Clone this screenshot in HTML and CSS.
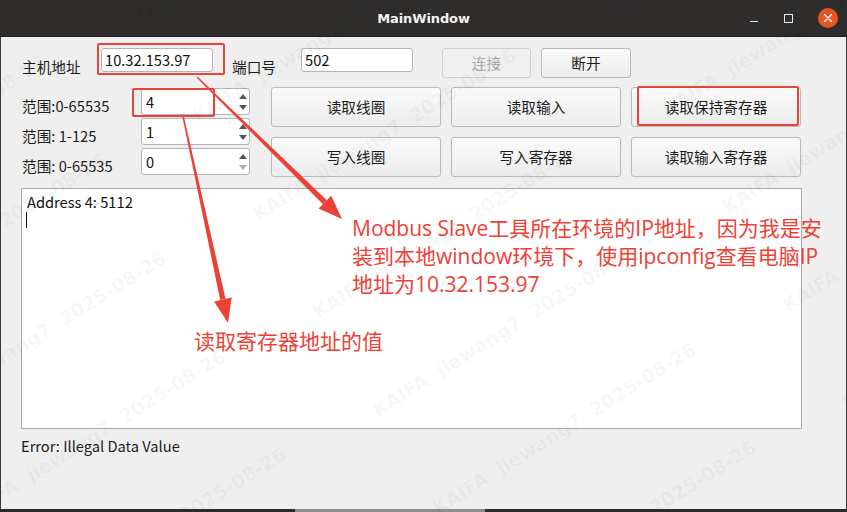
FILE: index.html
```html
<!DOCTYPE html>
<html lang="zh-CN">
<head>
<meta charset="utf-8">
<title>MainWindow</title>
<link rel="stylesheet" href="styles.css">
</head>
<body>
<div class="window">
  <header class="titlebar">
    <span class="title">MainWindow</span>
    <div class="controls">
      <span class="ctl-min"></span>
      <span class="ctl-max"></span>
      <span class="ctl-close">
        <svg width="20" height="20" viewBox="0 0 20 20"><path d="M6.5 6.5 L13.5 13.5 M13.5 6.5 L6.5 13.5" stroke="#fff" stroke-width="1.4" stroke-linecap="round"/></svg>
      </span>
    </div>
  </header>
  <main class="client">
    <div class="row-top">
      <span class="lbl lbl-host">主机地址</span>
      <div class="field field-ip">10.32.153.97</div>
      <span class="lbl lbl-port">端口号</span>
      <div class="field field-port">502</div>
      <button class="btn btn-conn" disabled>连接</button>
      <button class="btn btn-disc">断开</button>
    </div>
    <div class="mid">
      <div class="ranges">
        <div class="range-row">
          <span class="lbl lbl-range">范围:0-65535</span>
          <div class="spin"><span class="spin-val">4</span><span class="arrows"><i class="up"></i><i class="down"></i></span></div>
        </div>
        <div class="range-row">
          <span class="lbl lbl-range">范围: 1-125</span>
          <div class="spin"><span class="spin-val">1</span><span class="arrows"><i class="up"></i><i class="down"></i></span></div>
        </div>
        <div class="range-row">
          <span class="lbl lbl-range">范围: 0-65535</span>
          <div class="spin"><span class="spin-val">0</span><span class="arrows"><i class="up"></i><i class="down off"></i></span></div>
        </div>
      </div>
      <div class="btn-grid">
        <button class="btn">读取线圈</button>
        <button class="btn">读取输入</button>
        <button class="btn">读取保持寄存器</button>
        <button class="btn">写入线圈</button>
        <button class="btn">写入寄存器</button>
        <button class="btn">读取输入寄存器</button>
      </div>
    </div>
    <div class="output">
      <div class="out-line">Address 4: 5112</div>
      <span class="caret"></span>
    </div>
    <div class="status">Error: Illegal Data Value</div>
  </main>
  <div class="bottom-edge"><span class="edge-seg"></span></div>

  <div class="watermark" aria-hidden="true">
    <span class="wm a1">KAIFA&nbsp;&nbsp;jiewang7&nbsp;&nbsp;2025-08-26</span>
    <span class="wm a2">KAIFA&nbsp;&nbsp;jiewang7&nbsp;&nbsp;2025-08-26</span>
    <span class="wm a3">KAIFA&nbsp;&nbsp;jiewang7&nbsp;&nbsp;2025-08-26</span>
    <span class="wm a4">KAIFA&nbsp;&nbsp;jiewang7&nbsp;&nbsp;2025-08-26</span>
    <span class="wm a5">KAIFA&nbsp;&nbsp;jiewang7&nbsp;&nbsp;2025-08-26</span>
    <span class="wm b1">KAIFA&nbsp;&nbsp;jiewang7&nbsp;&nbsp;2025-08-26</span>
    <span class="wm b2">KAIFA&nbsp;&nbsp;jiewang7&nbsp;&nbsp;2025-08-26</span>
    <span class="wm b3">KAIFA&nbsp;&nbsp;jiewang7&nbsp;&nbsp;2025-08-26</span>
    <span class="wm b4">KAIFA&nbsp;&nbsp;jiewang7&nbsp;&nbsp;2025-08-26</span>
    <span class="wm b5">KAIFA&nbsp;&nbsp;jiewang7&nbsp;&nbsp;2025-08-26</span>
    <span class="wm b6">KAIFA&nbsp;&nbsp;jiewang7&nbsp;&nbsp;2025-08-26</span>
    <span class="wm b7">KAIFA&nbsp;&nbsp;jiewang7&nbsp;&nbsp;2025-08-26</span>
    <span class="wm c1">KAIFA&nbsp;&nbsp;jiewang7&nbsp;&nbsp;2025-08-26</span>
    <span class="wm c2">KAIFA&nbsp;&nbsp;jiewang7&nbsp;&nbsp;2025-08-26</span>
    <span class="wm c3">KAIFA&nbsp;&nbsp;jiewang7&nbsp;&nbsp;2025-08-26</span>
    <span class="wm c4">KAIFA&nbsp;&nbsp;jiewang7&nbsp;&nbsp;2025-08-26</span>
    <span class="wm c5">KAIFA&nbsp;&nbsp;jiewang7&nbsp;&nbsp;2025-08-26</span>
  </div>

  <span class="mark mark-ip"></span>
  <span class="mark mark-start"></span>
  <span class="mark mark-hold"></span>
  <svg class="arrows-layer" width="847" height="512" viewBox="0 0 847 512">
    <g fill="#ec4136">
      <polygon points="196.5,77.5 197.5,76.5 326.9,200.2 323.0,204.2"/>
      <polygon points="342,219 318.6,208.6 331.2,195.8"/>
      <polygon points="182.3,116.2 183.7,115.8 225.6,299 220.2,300.1"/>
      <polygon points="228,323 214.1,301.5 231.7,297.6"/>
    </g>
  </svg>
  <p class="note note-ip">Modbus Slave工具所在环境的IP地址，因为我是安<br>装到本地window环境下，使用ipconfig查看电脑IP<br>地址为10.32.153.97</p>
  <p class="note note-val">读取寄存器地址的值</p>
</div>
</body>
</html>
```
FILE: styles.css
```css
* { box-sizing: border-box; }
html, body { margin: 0; padding: 0; }
body {
  width: 847px;
  height: 512px;
  overflow: hidden;
  background: #2c2b2a;
  font-family: "Noto Sans CJK SC", "Noto Sans", sans-serif;
}
.window {
  position: relative;
  width: 847px;
  height: 512px;
  display: flex;
  flex-direction: column;
  overflow: hidden;
}

/* title bar */
.titlebar {
  height: 37px;
  flex: none;
  background: #2f2d2c;
  border-bottom: 1px solid #1f1e1d;
  display: flex;
  align-items: center;
  justify-content: center;
  position: relative;
}
.title {
  color: #f2f2f2;
  font-family: "DejaVu Sans", sans-serif;
  font-weight: bold;
  font-size: 13px;
  letter-spacing: -0.1px;
}
.controls {
  position: absolute;
  right: 9px;
  top: 8px;
  display: flex;
  align-items: center;
  height: 20px;
}
.ctl-min {
  width: 8px;
  height: 1px;
  background: #e8e8e8;
  margin-top: 6px;
  margin-right: 26px;
}
.ctl-max {
  width: 9px;
  height: 9px;
  border: 1px solid #e8e8e8;
  margin-right: 25px;
}
.ctl-close {
  width: 20px;
  height: 20px;
  border-radius: 50%;
  background: #e95420;
  display: flex;
}

/* client */
.client {
  flex: 1;
  background: #efefef;
  border-left: 1px solid #3a3a3a;
  border-right: 1px solid #3a3a3a;
  padding-left: 20px;
  font-size: 14.67px;
  color: #1c1c1c;
}
.lbl {
  display: block;
  line-height: 20px;
  white-space: nowrap;
}
.row-top {
  display: flex;
  align-items: flex-start;
  margin-top: 11px;
  height: 30px;
}
.lbl-host { margin-left: 1px; width: 79px; margin-top: 9px; }
.lbl-port { margin-left: 19px; width: 69px; margin-top: 9px; }
.field {
  height: 24px;
  width: 112px;
  background: #fff;
  border: 1px solid #b4b4b4;
  border-radius: 3px;
  padding-left: 3px;
  line-height: 22px;
  color: #111;
}
.btn {
  font-family: inherit;
  font-size: 14.67px;
  color: #1c1c1c;
  background: linear-gradient(#fafafa, #ececec);
  border: 1px solid #b9b9b9;
  border-radius: 3px;
  padding: 0;
  line-height: 20px;
}
.btn-conn {
  margin-left: 29px;
  width: 89px;
  height: 30px;
  color: #a9a9a9;
  background: #f0f0f0;
  border-color: #cdcdcd;
}
.btn-disc {
  margin-left: 10px;
  width: 90px;
  height: 30px;
}

.mid {
  display: flex;
  margin-top: 9px;
}
.ranges {
  width: 229px;
  padding-top: 1px;
}
.range-row {
  display: flex;
  align-items: flex-start;
  height: 30px;
}
.lbl-range { margin-left: 1px; width: 119px; margin-top: 8px; }
.spin {
  width: 109px;
  height: 27px;
  background: #fff;
  border: 1px solid #b4b4b4;
  border-radius: 3px;
  display: flex;
  align-items: center;
  justify-content: space-between;
  padding-left: 4px;
  padding-right: 1px;
}
.spin-val { line-height: 20px; color: #111; }
.arrows {
  display: flex;
  flex-direction: column;
  gap: 6px;
  width: 11px;
  align-items: center;
}
.arrows i {
  display: block;
  width: 0;
  height: 0;
  border-left: 4px solid transparent;
  border-right: 4px solid transparent;
}
.arrows .up { border-bottom: 5px solid #555; }
.arrows .down { border-top: 5px solid #555; }
.arrows .down.off { border-top-color: #acacac; }

.btn-grid {
  margin-left: 21px;
  display: grid;
  grid-template-columns: 170px 170px 170px;
  grid-auto-rows: 40px;
  gap: 10px;
}

.output {
  margin-top: 10px;
  width: 781px;
  height: 241px;
  background: #fff;
  border: 1px solid #ababab;
  padding: 3px 5px;
  color: #111;
}
.out-line { line-height: 20px; }
.caret {
  display: block;
  width: 1px;
  height: 16px;
  background: #111;
  margin-left: -1px;
}
.status {
  margin-top: 7px;
  line-height: 20px;
  font-size: 14.67px;
  color: #1c1c1c;
}
.bottom-edge {
  height: 3px;
  flex: none;
  background: #2b2b2b;
  position: relative;
}
.edge-seg {
  position: absolute;
  left: 295px;
  width: 190px;
  top: 0;
  height: 3px;
  background: #8d8d8d;
}

/* watermark: each string anchored at the end of its date */
.watermark {
  position: absolute;
  inset: 0;
  pointer-events: none;
  overflow: hidden;
}
.wm {
  position: absolute;
  white-space: nowrap;
  font-family: "DejaVu Sans", sans-serif;
  font-weight: bold;
  font-size: 19px;
  line-height: 22px;
  color: rgba(0, 0, 0, 0.045);
  transform-origin: 0 0;
  transform: rotate(-32deg) translate(-100%, -50%);
}
.a1 { left: 44px;  top: 60px; }
.a2 { left: 104px; top: 158px; }
.a3 { left: 164px; top: 256px; }
.a4 { left: 224px; top: 354px; }
.a5 { left: 284px; top: 452px; }
.b1 { left: 394px; top: -143px; }
.b2 { left: 454px; top: -45px; }
.b3 { left: 514px; top: 53px; }
.b4 { left: 574px; top: 151px; }
.b5 { left: 634px; top: 249px; }
.b6 { left: 694px; top: 347px; }
.b7 { left: 754px; top: 445px; }
.c1 { left: 864px; top: -150px; }
.c2 { left: 924px; top: -52px; }
.c3 { left: 984px; top: 46px; }
.c4 { left: 1044px; top: 144px; }
.c5 { left: 1104px; top: 242px; }

/* annotations */
.mark {
  position: absolute;
  border: 2px solid #e8443a;
  border-radius: 2px;
  pointer-events: none;
}
.mark-ip { left: 97px; top: 43px; width: 128px; height: 32px; }
.mark-start { left: 132px; top: 88px; width: 83px; height: 29px; }
.mark-hold { left: 637px; top: 86px; width: 162px; height: 40px; }
.arrows-layer {
  position: absolute;
  left: 0;
  top: 0;
  pointer-events: none;
}
.note {
  position: absolute;
  margin: 0;
  color: #ee4136;
  font-family: "Open Sans", "Noto Sans CJK SC", sans-serif;
  white-space: nowrap;
}
.note-ip {
  left: 352px;
  top: 214px;
  font-size: 21px;
  line-height: 28px;
}
.note-val {
  left: 194px;
  top: 328px;
  font-size: 21px;
  line-height: 26px;
}
```
